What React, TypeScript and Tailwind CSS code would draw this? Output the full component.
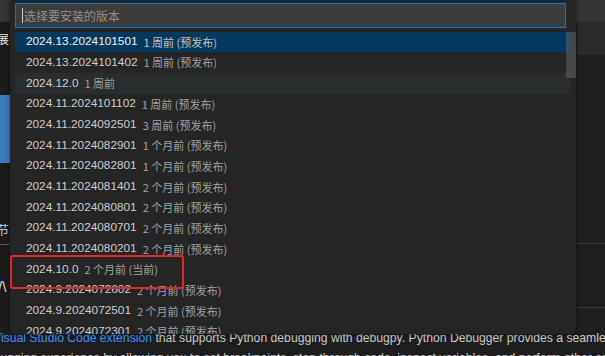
import React from "react";

const rows: { v: string; d: string; sel?: boolean; hover?: boolean }[] = [
  { v: "2024.13.2024101501", d: "1 周前 (预发布)", sel: true },
  { v: "2024.13.2024101402", d: "1 周前 (预发布)" },
  { v: "2024.12.0", d: "1 周前", hover: true },
  { v: "2024.11.2024101102", d: "1 周前 (预发布)" },
  { v: "2024.11.2024092501", d: "3 周前 (预发布)" },
  { v: "2024.11.2024082901", d: "1 个月前 (预发布)" },
  { v: "2024.11.2024082801", d: "1 个月前 (预发布)" },
  { v: "2024.11.2024081401", d: "2 个月前 (预发布)" },
  { v: "2024.11.2024080801", d: "2 个月前 (预发布)" },
  { v: "2024.11.2024080701", d: "2 个月前 (预发布)" },
  { v: "2024.11.2024080201", d: "2 个月前 (预发布)" },
  { v: "2024.10.0", d: "2 个月前 (当前)" },
  { v: "2024.9.2024072602", d: "2 个月前 (预发布)" },
  { v: "2024.9.2024072501", d: "2 个月前 (预发布)" },
  { v: "2024.9.2024072301", d: "2 个月前 (预发布)" },
];

const UI = "font-['Segoe_UI','Liberation_Sans','Noto_Sans_CJK_SC',sans-serif]";

export default function App() {
  return (
    <div className={`relative w-[605px] h-[356px] overflow-hidden bg-[#1e1e1e] ${UI}`}>
      {/* background: extension page */}
      <div className="flex h-full flex-col">
        <div className="h-[22px] shrink-0 bg-[#353535]" />
        <div className="flex h-[306px] shrink-0 flex-row">
          <div className="flex w-[10px] flex-col overflow-hidden bg-[#1b1b1b]">
            <div className="mt-[10px] -ml-[3px] text-[12px] leading-[14px] text-[#e8e8e8] font-['Noto_Sans_CJK_SC',sans-serif]">展</div>
            <div className="mt-[49px] h-[68px] bg-[#3b7cbc]" />
            <div className="mt-[60px] -ml-[3px] text-[12px] leading-[14px] text-[#d0d0d0] font-['Noto_Sans_CJK_SC',sans-serif]">节</div>
            <div className="mt-[7px] h-px bg-[#5a5a5a]" />
            <div className="mt-[34px] -ml-[2px] whitespace-nowrap text-[15px] leading-[16px] text-[#d8d8d8]">/\</div>
          </div>
          <div className="flex-1" />
          <div className="flex w-[28px] flex-col">
            <div className="h-[33px] bg-[#2b2b2b]" />
            <div className="h-[189px] border-b border-[#3c3c3c] bg-[#1f1f1f]" />
            <div className="h-[64px] border-b border-[#3c3c3c] bg-[#1e1e1e]" />
            <div className="flex-1 bg-[#1e1e1e]" />
          </div>
        </div>
        <div className="shrink-0 text-[12.2px] leading-[20px] text-[#cccccc]">
          <div className="-ml-[7px] whitespace-nowrap">
            <span className="text-[#3794ff]">Visual Studio Code extension</span> that supports Python debugging with debugpy. Python Debugger provides a seamless
          </div>
          <div className="-ml-[20px] whitespace-nowrap">
            debugging experience by allowing you to set breakpoints, step through code, inspect variables, and perform other essential debugging tasks.
          </div>
        </div>
      </div>

      {/* quick pick overlay */}
      <div className="absolute left-[10px] top-0 h-[334px] w-[566px] overflow-hidden rounded-b-[6px] bg-[#252526] shadow-[0_0_5px_rgba(0,0,0,0.5)]">
        <div className="ml-[5px] mt-[3px] flex h-[25px] w-[551px] items-center border border-[#0078d4] bg-[#3c3c3c] pl-[6px]">
          <div className="h-[15px] w-px bg-[#cccccc]" />
          <span className="ml-px text-[12px] text-[#8f8f8f] font-['Noto_Sans_CJK_SC',sans-serif]">选择要安装的版本</span>
        </div>
        <div className="mt-[3.7px] flex flex-col">
          {rows.map((r, i) => (
            <div
              key={i}
              className={`ml-[5px] flex h-[20.7px] w-[556px] shrink-0 items-center whitespace-nowrap pl-[11px] ${
                r.sel ? "bg-[#04395e]" : r.hover ? "bg-[#2a2d2e]" : ""
              }`}
            >
              <span className={`text-[11.8px] ${r.sel ? "text-[#f0f0f0]" : "text-[#cccccc]"}`}>{r.v}</span>
              <span className={`ml-[6px] text-[11px] font-['Noto_Sans_CJK_SC',sans-serif] ${r.sel ? "text-[#c4c4c4]" : "text-[#a2a2a2]"}`}>{r.d}</span>
            </div>
          ))}
        </div>
        <div className="absolute right-0 top-[32px] h-[46px] w-[10px] bg-[rgba(121,121,121,0.4)]" />
      </div>

      {/* annotation */}
      <div className="absolute left-[10px] top-[255px] h-[34px] w-[174px] rounded-[3px] border-2 border-[#e3252a]" />
    </div>
  );
}
